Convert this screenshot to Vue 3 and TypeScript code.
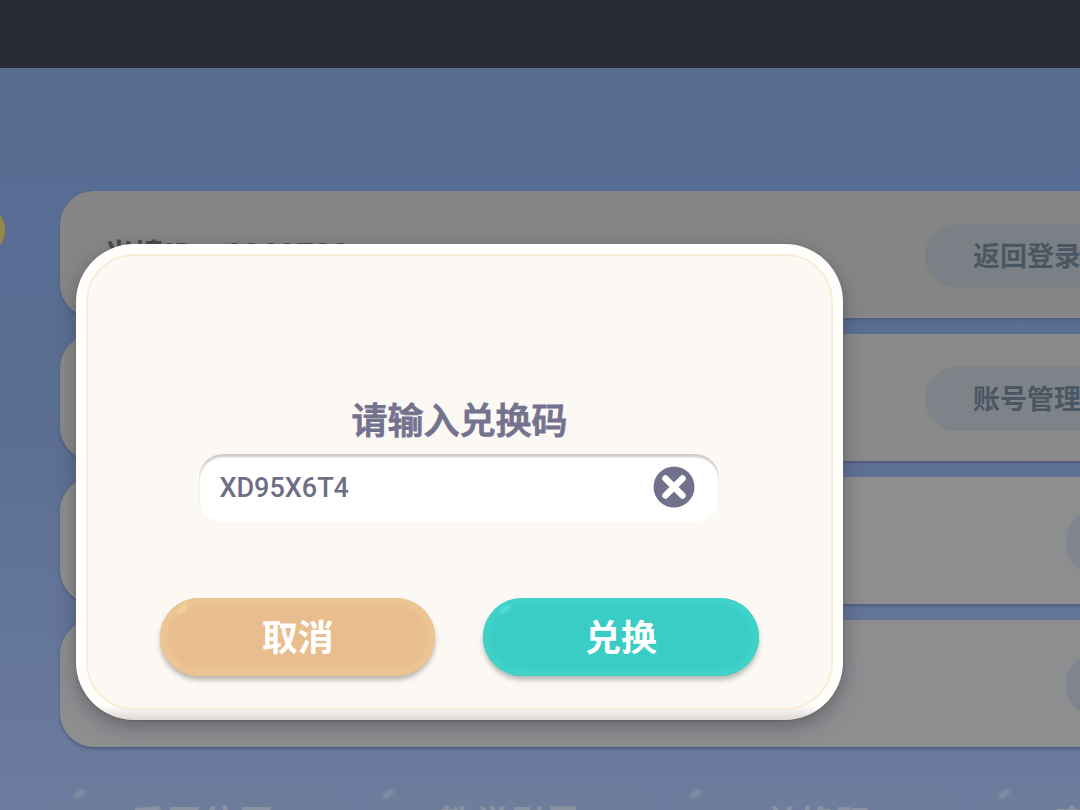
<script setup lang="ts">
import { ref } from 'vue'

interface Row {
  label?: string
  action?: string
}

const code = ref('XD95X6T4')
const rows: Row[] = [
  { label: '光境ID：8268738', action: '返回登录' },
  { action: '账号管理' },
  {},
  {},
]
const shortcuts: string[] = ['重置位置', '教学引导', '兑换码', '客服中心']
</script>

<template>
  <div class="page">
    <header class="bar"></header>
    <main class="stage">
      <span class="coin"></span>
      <section class="rows">
        <div v-for="(row, i) in rows" :key="i" class="row">
          <span class="row-label">{{ row.label }}</span>
          <button v-if="row.action" class="pill" type="button">{{ row.action }}</button>
          <button v-else class="pill pill-short" type="button" aria-label="切换"></button>
        </div>
      </section>
      <nav class="shortcuts">
        <button v-for="name in shortcuts" :key="name" class="shortcut" type="button">{{ name }}</button>
      </nav>
      <form class="dialog" role="dialog" aria-labelledby="code-label" @submit.prevent>
        <div class="dialog-body">
          <label id="code-label" class="title" for="code">请输入兑换码</label>
          <div class="field">
            <input id="code" v-model="code" type="text" autocomplete="off" spellcheck="false" />
            <button class="clear" type="button" aria-label="清除" @click="code = ''">
              <svg viewBox="0 0 42 42" width="42" height="42">
                <circle cx="21" cy="21" r="20.5" fill="#72718c" />
                <path d="M12.5 12.5 L29.5 29.5 M29.5 12.5 L12.5 29.5" stroke="#fff" stroke-width="6.5" stroke-linecap="round" />
              </svg>
            </button>
          </div>
          <div class="actions">
            <button class="btn cancel" type="button">取消</button>
            <button class="btn confirm" type="submit">兑换</button>
          </div>
        </div>
      </form>
    </main>
  </div>
</template>

<style>
body {
  margin: 0;
}
</style>

<style scoped>
.page {
  display: flex;
  flex-direction: column;
  height: 100vh;
  overflow: hidden;
  font-family: "Liberation Sans", "Noto Sans CJK SC", sans-serif;
}
button,
input {
  font-family: inherit;
  border: 0;
  margin: 0;
}
button {
  cursor: pointer;
}
.bar {
  flex: 0 0 68px;
  background: #292c35;
}
.stage {
  position: relative;
  flex: 1;
  min-height: 0;
  overflow: hidden;
  background: linear-gradient(#586c8e, #586d94 20%, #5c6f93 50%, #6b7c9e);
}
.coin {
  position: absolute;
  left: -43px;
  top: 138px;
  width: 48px;
  height: 48px;
  border-radius: 50%;
  background: #97874a;
  box-shadow: 0 0 3px #75744f;
}
.rows {
  display: flex;
  flex-direction: column;
  gap: 16px;
  margin: 123px -80px 0 60px;
}
.row {
  display: flex;
  align-items: center;
  justify-content: space-between;
  box-sizing: border-box;
  height: 127px;
  padding: 0 32px 0 44px;
  border-radius: 34px;
  background: #868686;
  box-shadow: 0 2px 3px #4f5d7a;
}
.row:nth-child(2) {
  background: #8a8a8b;
}
.row:nth-child(n + 3) {
  background: #8d8e90;
}
.row-label {
  padding-bottom: 6px;
  color: #4a484c;
  font-family: "Noto Sans CJK SC", sans-serif;
  font-size: 30px;
  font-weight: 700;
}
.pill {
  height: 62px;
  padding: 0 47px;
  border-radius: 31px;
  background: #7b8086;
  color: #4b5663;
  font-size: 27px;
  font-weight: 700;
  box-shadow: 0 1px 3px #767a7f;
}
.row:nth-child(2) .pill {
  background: #7e8289;
}
.pill-short {
  width: 61px;
  padding: 0;
  background: #80848f;
}
.shortcuts {
  display: grid;
  grid-template-columns: repeat(4, 292px);
  gap: 16px;
  margin: 38px 0 0 56px;
}
.shortcut {
  position: relative;
  height: 72px;
  padding: 0;
  border-radius: 36px;
  background: #6d7d9b;
  color: #8a93a2;
  font-size: 36px;
  font-weight: 700;
}
.shortcut::before {
  content: "";
  position: absolute;
  left: 18px;
  top: 6px;
  width: 12px;
  height: 6px;
  border-radius: 50%;
  background: #7f8ba2;
  box-shadow: 0 0 4px #7f8ba2;
  transform: rotate(-35deg);
}
.dialog {
  position: absolute;
  left: 76px;
  top: 176px;
  width: 71%;
  box-sizing: border-box;
  padding: 10px;
  border-radius: 58px;
  background: linear-gradient(#fffefb 97%, #dcd8d3);
  box-shadow: 0 6px 20px rgba(50, 50, 60, 0.45), 0 1px 2px #777;
}
.dialog-body {
  display: flex;
  flex-direction: column;
  align-items: center;
  padding: 146px 72px 32px;
  border: 2px solid #faecd6;
  border-radius: 48px;
  background: #fcf9f4;
}
.title {
  color: #74738f;
  font-size: 36px;
  line-height: 40px;
  font-weight: 500;
  -webkit-text-stroke: 1px #74738f;
}
.field {
  display: flex;
  align-items: center;
  box-sizing: border-box;
  width: 520px;
  max-width: 100%;
  height: 68px;
  margin-top: 12px;
  padding: 0 24px 2px 20px;
  border-radius: 24px;
  background: #fff;
  box-shadow: inset 0 3px 2px #cfcbc8;
}
.field input {
  flex: 1;
  min-width: 0;
  padding: 2px 0 0;
  outline: 0;
  background: transparent;
  color: #6f6e85;
  font-family: Roboto, sans-serif;
  font-size: 27px;
  font-weight: 500;
}
.clear {
  display: flex;
  padding: 0;
  background: transparent;
}
.actions {
  display: flex;
  gap: 48px;
  align-self: stretch;
  margin-top: 76px;
}
.btn {
  position: relative;
  flex: 1;
  height: 78px;
  padding: 0 0 4px;
  border-radius: 39px;
  color: #fff;
  font-size: 36px;
  font-weight: 700;
}
.btn::before {
  content: "";
  position: absolute;
  left: 16px;
  top: 9px;
  width: 12px;
  height: 5px;
  border-radius: 50%;
  transform: rotate(-35deg);
}
.cancel {
  background: #e9be8e;
  box-shadow: inset 0 0 3px 7px #edc592, 0 4px 5px #bdb5ac;
}
.cancel::before {
  background: #f3d09b;
  box-shadow: 0 0 4px #f3d09b;
}
.confirm {
  background: #39cdc5;
  box-shadow: inset 0 0 3px 7px #40d2c9, 0 4px 5px #b5bab5;
}
.confirm::before {
  background: #50ddd6;
  box-shadow: 0 0 4px #50ddd6;
}
</style>
